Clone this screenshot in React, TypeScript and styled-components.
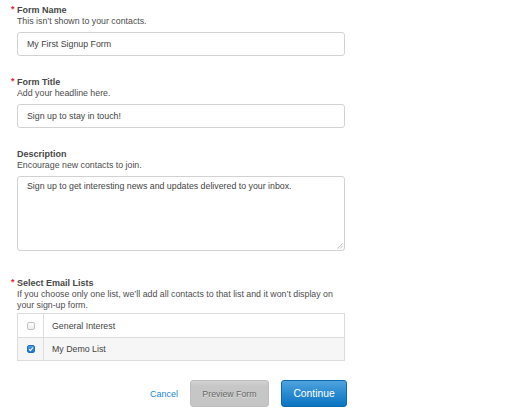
import React from "react";
import styled, { createGlobalStyle } from "styled-components";

const Global = createGlobalStyle`
  html, body { margin: 0; padding: 0; background: #ffffff; }
  body { font-family: "Liberation Sans", Arial, Helvetica, sans-serif; }
  * { box-sizing: border-box; }
`;

const Page = styled.div`
  width: 520px;
  height: 418px;
  padding: 5px 0 0 17px;
  display: flex;
  flex-direction: column;
`;

const Form = styled.div`
  width: 328px;
  display: flex;
  flex-direction: column;
`;

const Field = styled.div<{ $after: number }>`
  display: flex;
  flex-direction: column;
  margin-bottom: ${(p) => p.$after}px;
`;

const Label = styled.div<{ $required?: boolean }>`
  position: relative;
  font-size: 9px;
  font-weight: bold;
  line-height: 11px;
  color: #474747;
  &::before {
    content: ${(p) => (p.$required ? '"*"' : '""')};
    position: absolute;
    left: -6px;
    top: -1px;
    color: #e8262b;
    font-size: 9px;
  }
`;

const Help = styled.div<{ $gap: number }>`
  font-size: 8.8px;
  line-height: ${(p) => (p.$gap < 5 ? "10.5px" : "11px")};
  color: #4d4d4d;
  margin-bottom: ${(p) => p.$gap}px;
`;

const TextInput = styled.input`
  display: block;
  width: 328px;
  height: 24px;
  border: 1px solid #d2d2d2;
  border-radius: 3px;
  padding: 0 9px;
  font-family: "Liberation Sans", Arial, sans-serif;
  font-size: 8.8px;
  color: #444444;
  background: #fff;
  outline: none;
`;

const AreaWrap = styled.div`
  position: relative;
  width: 328px;
  height: 75px;
`;

const TextArea = styled.textarea`
  display: block;
  width: 328px;
  height: 75px;
  border: 1px solid #d2d2d2;
  border-radius: 3px;
  padding: 4px 9px;
  font-family: "Liberation Sans", Arial, sans-serif;
  font-size: 8.8px;
  line-height: 11px;
  color: #444444;
  background: #fff;
  resize: none;
  outline: none;
`;

const Grip = styled.svg`
  position: absolute;
  right: 2px;
  bottom: 2px;
  pointer-events: none;
`;

const ListTable = styled.div`
  width: 328px;
  border: 1px solid #dcdcdc;
  display: flex;
  flex-direction: column;
`;

const ListRow = styled.div<{ $shaded?: boolean }>`
  display: flex;
  height: 23px;
  background: ${(p) => (p.$shaded ? "#f6f6f6" : "#ffffff")};
  & + & {
    border-top: 1px solid #dcdcdc;
  }
`;

const CheckCell = styled.div`
  width: 26px;
  border-right: 1px solid #dcdcdc;
  display: flex;
  align-items: center;
  justify-content: center;
`;

const Box = styled.span<{ $checked?: boolean }>`
  width: 8px;
  height: 8px;
  border-radius: 2px;
  display: flex;
  align-items: center;
  justify-content: center;
  border: 1px solid ${(p) => (p.$checked ? "#1f6fc0" : "#c2c2c2")};
  background: ${(p) =>
    p.$checked ? "linear-gradient(#4d9be0, #1f74cc)" : "linear-gradient(#ffffff, #ececec)"};
`;

const ListName = styled.div`
  flex: 1;
  display: flex;
  align-items: center;
  padding-left: 8px;
  font-size: 8.8px;
  color: #444444;
`;

const Actions = styled.div`
  width: 330px;
  margin-top: 19px;
  display: flex;
  justify-content: flex-end;
  align-items: center;
  gap: 12px;
`;

const LinkButton = styled.a`
  font-size: 9px;
  color: #2486d4;
  text-decoration: none;
`;

const PreviewButton = styled.button`
  width: 79px;
  height: 27px;
  border: 1px solid #bdbdbd;
  border-radius: 3px;
  background: linear-gradient(#d2d3d2, #c6c7c6 20%, #c4c5c4);
  color: #666666;
  font-family: "Liberation Sans", Arial, sans-serif;
  font-size: 8.8px;
  text-shadow: 0 1px 0 rgba(255, 255, 255, 0.5);
  padding: 0;
`;

const ContinueButton = styled.button`
  width: 66px;
  height: 27px;
  border: 1px solid #0b6aae;
  border-radius: 3px;
  background: linear-gradient(#4fa3dd, #2a8ad0 50%, #0b74c1);
  color: #ffffff;
  font-family: "Liberation Sans", Arial, sans-serif;
  font-size: 10.3px;
  padding: 0;
`;

const Check = () => (
  <svg width="6" height="6" viewBox="0 0 6 6">
    <path d="M1 3.2 L2.4 4.6 L5 1.5" fill="none" stroke="#fff" strokeWidth="1.1" />
  </svg>
);

export default function App() {
  return (
    <>
      <Global />
      <Page>
        <Form>
          <Field $after={21}>
            <Label $required>Form Name</Label>
            <Help $gap={5}>This isn’t shown to your contacts.</Help>
            <TextInput defaultValue="My First Signup Form" />
          </Field>
          <Field $after={21}>
            <Label $required>Form Title</Label>
            <Help $gap={5}>Add your headline here.</Help>
            <TextInput defaultValue="Sign up to stay in touch!" />
          </Field>
          <Field $after={27}>
            <Label>Description</Label>
            <Help $gap={5}>Encourage new contacts to join.</Help>
            <AreaWrap>
              <TextArea defaultValue="Sign up to get interesting news and updates delivered to your inbox." />
              <Grip width="6" height="6" viewBox="0 0 6 6">
                <path d="M0.5 5.5 L5.5 0.5 M3 5.5 L5.5 3" stroke="#b0b0b0" strokeWidth="0.8" />
              </Grip>
            </AreaWrap>
          </Field>
          <Field $after={0}>
            <Label $required>Select Email Lists</Label>
            <Help $gap={3}>
              If you choose only one list, we’ll add all contacts to that list and it won’t display on your sign-up form.
            </Help>
            <ListTable>
              <ListRow>
                <CheckCell>
                  <Box />
                </CheckCell>
                <ListName>General Interest</ListName>
              </ListRow>
              <ListRow $shaded>
                <CheckCell>
                  <Box $checked>
                    <Check />
                  </Box>
                </CheckCell>
                <ListName>My Demo List</ListName>
              </ListRow>
            </ListTable>
          </Field>
          <Actions>
            <LinkButton href="#">Cancel</LinkButton>
            <PreviewButton>Preview Form</PreviewButton>
            <ContinueButton>Continue</ContinueButton>
          </Actions>
        </Form>
      </Page>
    </>
  );
}
